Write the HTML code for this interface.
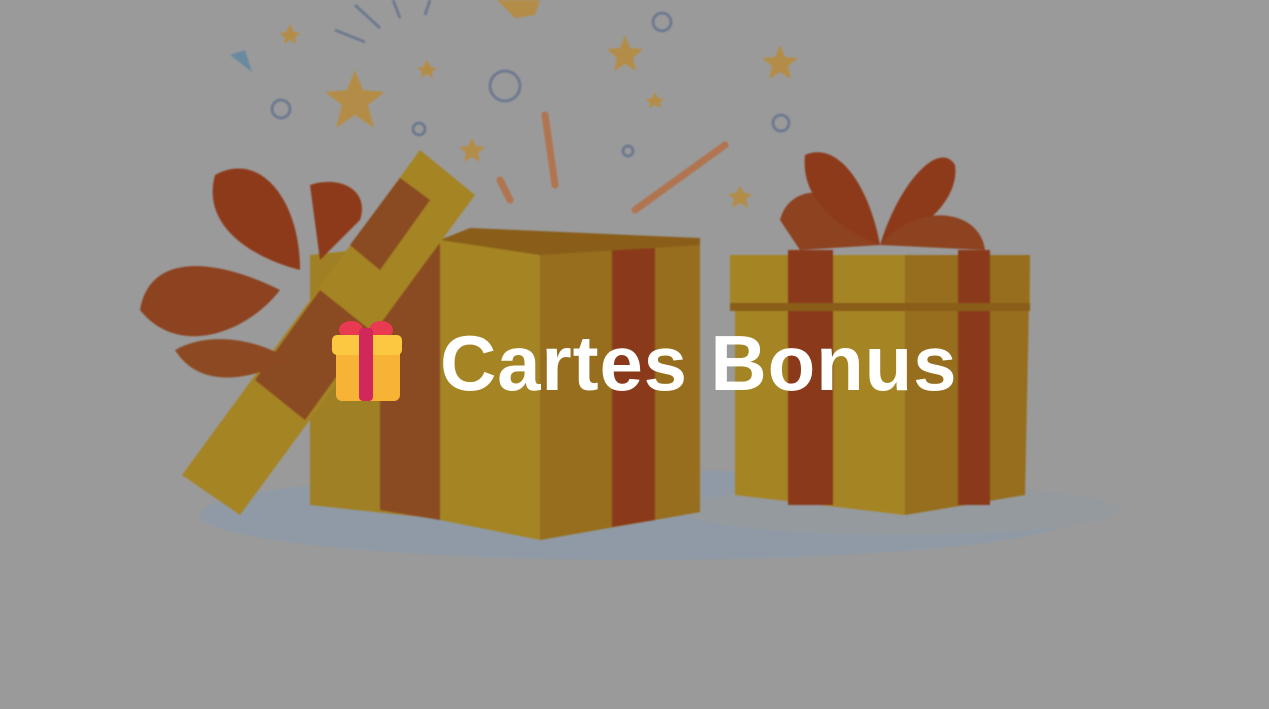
<!DOCTYPE html>
<html><head><meta charset="utf-8"><style>
html,body{margin:0;padding:0;width:1269px;height:709px;overflow:hidden;background:#9a9a9a;}
svg{position:absolute;left:0;top:0}
.t{position:absolute;left:440px;top:318px;font:bold 78px "Liberation Sans",sans-serif;color:#fff;white-space:nowrap;letter-spacing:0.85px}
</style></head><body>
<svg width="1269" height="709" viewBox="0 0 1269 709" style="filter:blur(0.8px)">
<rect width="1269" height="709" fill="#9a9a9a"/>
<ellipse cx="640" cy="515" rx="440" ry="45" fill="#8f9aa6"/>
<ellipse cx="900" cy="510" rx="220" ry="25" fill="#959a9f"/>
<g fill="#b38d48">
<polygon points="355,70 363,90 385,92 368,105 374,128 355,115 336,128 342,105 325,92 347,90"/>
<polygon points="625,35 630,48 643,49 633,58 636,71 625,64 614,71 617,58 607,49 620,48"/>
<polygon points="780,45 785,57 798,58 788,66 791,79 780,72 769,79 772,66 762,58 775,57"/>
<polygon points="472,138 476,146 485,147 478,153 480,162 472,157 464,162 466,153 459,147 468,146"/>
<polygon points="740,186 744,193 752,194 746,199 748,208 740,203 732,208 734,199 728,194 736,193"/>
<polygon points="497,0 540,0 535,15 515,18"/>
<polygon points="290,24 294,32 300,33 295,38 296,44 290,40 284,44 285,38 280,33 286,32"/>
<polygon points="427,60 431,67 437,68 432,72 433,78 427,74 421,78 422,72 417,68 423,67"/>
<polygon points="655,92 658,98 664,99 660,103 661,108 655,105 649,108 650,103 646,99 652,98"/>
</g>
<g fill="none" stroke="#6f7a90" stroke-width="3">
<circle cx="505" cy="86" r="15"/><circle cx="281" cy="109" r="9"/><circle cx="419" cy="129" r="6"/>
<circle cx="662" cy="22" r="9"/><circle cx="781" cy="123" r="8"/><circle cx="628" cy="151" r="5"/>
</g>
<g stroke="#6f7a90" stroke-width="3"><line x1="335" y1="30" x2="365" y2="42"/><line x1="355" y1="5" x2="380" y2="28"/><line x1="393" y1="0" x2="400" y2="18"/><line x1="430" y1="0" x2="425" y2="15"/></g>
<g stroke="#b07550" stroke-width="7" stroke-linecap="round"><line x1="635" y1="210" x2="725" y2="145"/><line x1="545" y1="115" x2="555" y2="185"/><line x1="500" y1="180" x2="510" y2="200"/></g>
<path d="M230,55 L245,50 L252,72 Z" fill="#6a8aa0"/>
<polygon points="310,255 450,240 450,520 310,505" fill="#a08024"/>
<polygon points="380,250 440,244 440,520 380,510" fill="#8a4a22"/>
<polygon points="440,240 700,245 700,512 540,540 440,520" fill="#a58424"/>
<polygon points="540,250 700,245 700,512 540,540" fill="#966e1e"/>
<polygon points="612,250 655,248 655,520 612,527" fill="#8a3a1a"/>
<polygon points="440,240 470,228 700,238 700,245 540,255" fill="#8a5e18"/>
<polygon points="182,475 420,150 475,195 240,515" fill="#a58424"/>
<polygon points="255,380 320,290 370,330 305,420" fill="#8a4a22"/>
<polygon points="350,245 400,178 430,200 380,270" fill="#8a4a22"/>
<path d="M140,310 C150,250 220,260 280,290 C250,330 180,360 140,310Z" fill="#8d4220"/>
<path d="M215,175 C260,150 300,200 300,270 C260,260 200,230 215,175Z" fill="#8d3a1a"/>
<path d="M310,185 C340,175 370,190 360,220 L320,260Z" fill="#8d3a1a"/>
<path d="M175,350 C210,330 260,340 290,360 C250,380 200,390 175,350Z" fill="#8d4a22"/>
<polygon points="730,255 1030,255 1030,308 730,308" fill="#a58424"/>
<polygon points="735,308 1025,308 1025,495 905,515 735,495" fill="#a58424"/>
<polygon points="905,255 1030,255 1025,495 905,515" fill="#966e1e"/>
<rect x="788" y="250" width="45" height="255" fill="#8a3a1a"/>
<rect x="958" y="250" width="32" height="255" fill="#8a3a1a"/>
<rect x="730" y="303" width="300" height="8" fill="#8a5e18"/>
<path d="M780,220 C790,180 850,180 880,245 L800,250Z" fill="#8d4220"/>
<path d="M805,155 C840,140 870,190 880,245 C840,230 800,200 805,155Z" fill="#8d3a1a"/>
<path d="M880,245 C900,180 940,140 955,165 C960,200 920,235 880,245Z" fill="#8d3a1a"/>
<path d="M880,245 C920,200 980,210 985,250 Z" fill="#8d4220"/>
</svg>
<svg width="80" height="90" style="left:326px;top:316px" viewBox="0 0 80 90">
<ellipse cx="25" cy="14" rx="12" ry="9" fill="#e83a50"/><ellipse cx="55" cy="14" rx="12" ry="9" fill="#e83a50"/>
<rect x="10" y="26" width="64" height="59" rx="6" fill="#f6b336"/>
<rect x="6" y="19" width="70" height="20" rx="5" fill="#fcc842"/>
<rect x="33" y="12" width="14" height="73" rx="4" fill="#d0285a"/>
</svg>
<div class="t">Cartes Bonus</div>
</body></html>
